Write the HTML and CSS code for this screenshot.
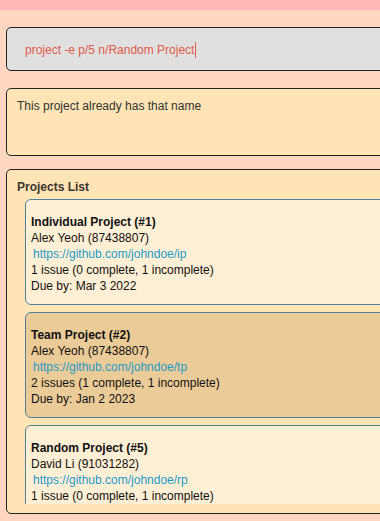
FILE: index.html
```html
<!DOCTYPE html>
<html lang="en">
<head>
  <meta charset="UTF-8">
  <meta name="viewport" content="width=device-width, initial-scale=1.0">
  <title>Project Tracker</title>
  <link rel="stylesheet" href="styles.css">
</head>
<body>

  <div class="topbar"></div>

  <div class="main">
    <!-- Command input -->
    <div class="command">
      <span class="command-text">project -e p/5 n/Random Project</span><span class="caret"></span>
    </div>

    <!-- Result display -->
    <div class="result">
      <p>This project already has that name</p>
    </div>

    <!-- Project list -->
    <div class="panel">
      <h2>Projects List</h2>
      <div class="list">
        <div class="card">
          <p class="name">Individual Project (#1)</p>
          <p>Alex Yeoh (87438807)</p>
          <p class="link">https://github.com/johndoe/ip</p>
          <p>1 issue (0 complete, 1 incomplete)</p>
          <p>Due by: Mar 3 2022</p>
        </div>
        <div class="card selected">
          <p class="name">Team Project (#2)</p>
          <p>Alex Yeoh (87438807)</p>
          <p class="link">https://github.com/johndoe/tp</p>
          <p>2 issues (1 complete, 1 incomplete)</p>
          <p>Due by: Jan 2 2023</p>
        </div>
        <div class="card">
          <p class="name">Random Project (#5)</p>
          <p>David Li (91031282)</p>
          <p class="link">https://github.com/johndoe/rp</p>
          <p>1 issue (0 complete, 1 incomplete)</p>
        </div>
      </div>
    </div>
  </div>

</body>
</html>
```

FILE: styles.css
```css
body {
  font-family: 'Liberation Sans', Arial, sans-serif;
  background-color: #ffd7c0;
  margin: 0;
  padding: 0;
  height: 521px;
  overflow: hidden;
}

p {
  margin: 0;
}

.topbar {
  height: 10px;
  background-color: #ffb6b4;
}

.main {
  width: 420px;
  padding: 17px 0 0 6px;
  display: flex;
  flex-direction: column;
}

.command {
  height: 42px;
  background-color: #e0e0e0;
  border: 1px solid #222;
  border-radius: 5px;
  padding-left: 18px;
  padding-top: 2px;
  box-sizing: border-box;
  height: 44px;
  display: flex;
  align-items: center;
}

.command-text {
  color: #e05a47;
  font-size: 12px;
}

.caret {
  display: inline-block;
  width: 1px;
  height: 16px;
  margin-left: 1px;
  background-color: #e05a47;
}

.result {
  margin-top: 17px;
  height: 48px;
  background-color: #ffe4b5;
  border: 1px solid #222;
  border-radius: 5px;
  padding: 9px 10px 9px 10px;
  font-size: 12px;
  line-height: 16px;
  color: #333;
}

.panel {
  margin-top: 13px;
  height: 325px;
  background-color: #ffe4b5;
  border: 1px solid #222;
  border-radius: 5px;
  padding: 9px 0 9px 10px;
  display: flex;
  flex-direction: column;
}

.panel h2 {
  margin: 0 0 4px 0;
  font-size: 12px;
  line-height: 16px;
  font-weight: bold;
  color: #3d3530;
}

.list {
  flex: 1;
  overflow: hidden;
  padding-left: 8px;
  display: flex;
  flex-direction: column;
  gap: 7px;
}

.card {
  flex-shrink: 0;
  background-color: #ffefd5;
  border: 1px solid #4f7f9c;
  border-radius: 6px;
  padding: 14px 6px 10px 5px;
  font-size: 12px;
  line-height: 16px;
  color: #111;
}

.card.selected {
  background-color: #ebcb98;
}

.card .name {
  font-weight: bold;
}

.card .link {
  color: #1f9ac9;
  margin-left: 2px;
}
```
